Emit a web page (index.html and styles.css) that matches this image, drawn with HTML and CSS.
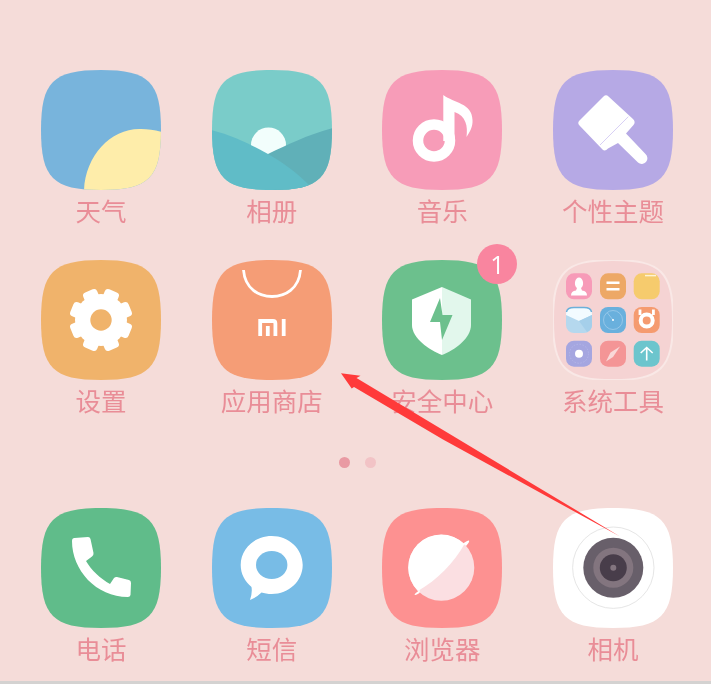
FILE: index.html
```html
<!DOCTYPE html>
<html lang="zh-CN">
<head>
<meta charset="utf-8">
<title>主屏幕</title>
<link rel="stylesheet" href="styles.css">
</head>
<body>
<svg class="defs" width="0" height="0" aria-hidden="true">
  <defs>
    <path id="sq" d="M60 0C84 0 99 3 108 12C117 21 120 36 120 60C120 84 117 99 108 108C99 117 84 120 60 120C36 120 21 117 12 108C3 99 0 84 0 60C0 36 3 21 12 12C21 3 36 0 60 0Z"/>
    <clipPath id="sqclip"><use href="#sq"/></clipPath>
    <rect id="tooth" x="52.500" y="28.500" width="15" height="14" rx="3.500"/>
  </defs>
</svg>
<main class="screen">
  <section class="grid">
    <div class="app">
      <svg class="icon" viewBox="0 0 120 120">
        <g clip-path="url(#sqclip)">
          <rect width="120" height="120" fill="#78b4dc"/>
          <path d="M43 121C44 86 70 58 100 59C107 59 114 60 121 62V121Z" fill="#feedaa"/>
        </g>
      </svg>
      <span class="label">天气</span>
    </div>
    <div class="app">
      <svg class="icon" viewBox="0 0 120 120">
        <g clip-path="url(#sqclip)">
          <rect width="120" height="120" fill="#7accc9"/>
          <circle cx="56.500" cy="75" r="17.500" fill="#f2fefc"/>
          <path d="M56 84C75 75 95 65 121 58V121H56Z" fill="#60b0b8"/>
          <path d="M-1 60C20 65 40 75 56 84C72 93 85 103 98 116L100 121H-1Z" fill="#60bcc7"/>
        </g>
      </svg>
      <span class="label">相册</span>
    </div>
    <div class="app">
      <svg class="icon" viewBox="0 0 120 120">
        <use href="#sq" fill="#f79cb8"/>
        <circle cx="52" cy="70.500" r="16" fill="none" stroke="#fff" stroke-width="10.500"/>
        <path d="M61.300 25C72 33 90 33 90.500 50C91 56 88 62 84.500 67C86 56 84 46 72.500 42V71H61.300Z" fill="#fff"/>
      </svg>
      <span class="label">音乐</span>
    </div>
    <div class="app">
      <svg class="icon" viewBox="0 0 120 120">
        <use href="#sq" fill="#b6a9e5"/>
        <path d="M50.500 26.500Q53 24 55.500 26.500L80 49Q83 52 80.500 55L73 63.500L92.500 84A5.500 5.500 0 0 1 85 92.500L65 73L55 78.500Q52 82 49.500 79.500L26.500 55.500Q24 53 26.500 50.500Z" fill="#fff"/>
        <path d="M75.300 46.700L47 75" stroke="#d8d0f5" stroke-width="1" fill="none"/>
      </svg>
      <span class="label">个性主题</span>
    </div>

    <div class="app">
      <svg class="icon" viewBox="0 0 120 120">
        <use href="#sq" fill="#f0b36b"/>
        <g fill="#fff">
          <circle cx="60" cy="60" r="26"/>
          <use href="#tooth" transform="rotate(22.500 60 60)"/>
          <use href="#tooth" transform="rotate(67.500 60 60)"/>
          <use href="#tooth" transform="rotate(112.500 60 60)"/>
          <use href="#tooth" transform="rotate(157.500 60 60)"/>
          <use href="#tooth" transform="rotate(202.500 60 60)"/>
          <use href="#tooth" transform="rotate(247.500 60 60)"/>
          <use href="#tooth" transform="rotate(292.500 60 60)"/>
          <use href="#tooth" transform="rotate(337.500 60 60)"/>
        </g>
        <circle cx="60" cy="60" r="10.700" fill="#f0b36b"/>
      </svg>
      <span class="label">设置</span>
    </div>
    <div class="app">
      <svg class="icon" viewBox="0 0 120 120">
        <use href="#sq" fill="#f59d76"/>
        <path d="M31.500 10C33 29 47 36.500 60 36.500C73 36.500 87 29 88.500 10" fill="none" stroke="#fff" stroke-width="2.800"/>
        <g fill="none" stroke="#fff" stroke-width="3.800">
          <path d="M48.200 76V61H61Q63.400 61 63.400 63.500V76"/>
          <path d="M55.800 76V66"/>
          <path d="M71.700 76V59"/>
        </g>
      </svg>
      <span class="label">应用商店</span>
    </div>
    <div class="app">
      <svg class="icon" viewBox="0 0 120 120">
        <use href="#sq" fill="#6cc08d"/>
        <path d="M60 27L30 39.500V65C30 78 47 90 60 95Z" fill="#fff"/>
        <path d="M60 27L89 39.500V65C89 78 73 90 60 95Z" fill="#e2f7ec"/>
        <path d="M58 38L48 62H58L60 80L70.500 55H60.500Z" fill="#6cc08d"/>
      </svg>
      <span class="label">安全中心</span>
      <span class="badge">1</span>
    </div>
    <div class="app">
      <svg class="icon" viewBox="0 0 120 120">
        <use href="#sq" fill="#f5d3d3" stroke="#f9e8e6" stroke-width="2"/>
        <rect x="13" y="13.300" width="26" height="26" rx="8" fill="#f79bb8"/>
        <path d="M18 35.500Q18 31 23 30.500L24 28Q21.500 26 22 22Q23 17.500 26 17.500Q29 17.500 30 22Q30.500 26 28 28L29 30.500Q34 31 34 35.500Z" fill="#fff"/>
        <rect x="47" y="13.300" width="26" height="26" rx="8" fill="#eda866"/>
        <path d="M53.500 22.800H66.500M53.500 29.300H66.500" stroke="#fff" stroke-width="2.500"/>
        <rect x="80.700" y="13.300" width="26" height="26" rx="8" fill="#f6cb6d"/>
        <path d="M92 15.600H103" stroke="#fdf3d6" stroke-width="1.500"/>
        <rect x="13" y="47" width="26" height="26" rx="8" fill="#b5d8ee"/>
        <path d="M13 55Q13 47 21 47H31Q39 47 39 55L26 61Z" fill="#f3fbff"/>
        <path d="M13.500 52Q14 47.500 21 47.500H31Q38 47.500 38.500 52" fill="none" stroke="#6cb0d9" stroke-width="1.500"/>
        <path d="M26 61L39 55V65Q39 70 34 72Z" fill="#a5cfea"/>
        <rect x="47" y="47" width="26" height="26" rx="8" fill="#69b0dd"/>
        <circle cx="60" cy="60" r="9.500" fill="none" stroke="#a7d0ec" stroke-width=".7"/>
        <path d="M60 60L54.500 53" stroke="#a7d0ec" stroke-width=".7"/>
        <circle cx="60" cy="60" r="1" fill="#fff"/>
        <rect x="80.700" y="47" width="26" height="26" rx="8" fill="#f59b70"/>
        <path d="M87 55V49.500M100.400 55V49.500" stroke="#fff" stroke-width="2.800"/>
        <circle cx="93.700" cy="60.500" r="6" fill="none" stroke="#fff" stroke-width="4"/>
        <rect x="13" y="80.700" width="26" height="26" rx="8" fill="#a5a6e0"/>
        <circle cx="26" cy="93.700" r="4" fill="#fff"/>
        <circle cx="26" cy="93.700" r="9.500" fill="none" stroke="#b9baea" stroke-width=".7" stroke-dasharray="1.500 1.500"/>
        <rect x="47" y="80.700" width="26" height="26" rx="8" fill="#f49596"/>
        <path d="M67 86.500L60 97L53 101.500L57.500 92.500Z" fill="#f9d8d8"/>
        <rect x="80.700" y="80.700" width="26" height="26" rx="8" fill="#6cc5cd"/>
        <path d="M93.700 100.500V87.500M87.700 93L93.700 87.500L99.700 93" fill="none" stroke="#fff" stroke-width="1.600"/>
      </svg>
      <span class="label">系统工具</span>
    </div>
  </section>

  <div class="dots">
    <span class="dot dot-on"></span>
    <span class="dot"></span>
  </div>

  <section class="grid">
    <div class="app">
      <svg class="icon" viewBox="0 0 120 120">
        <use href="#sq" fill="#60bc8a"/>
        <path d="M33.500 30L47 29Q49 29 49.500 31L52.500 45Q52.800 47 51 48.500L45 53C50 62 60 71 69 76L73 70Q74.500 68.500 76 69L88 72Q90 72.500 90 75L89.500 87Q89 89 87 89C55 89 31 62 31 33Q31 30 33.500 30Z" fill="#fff"/>
      </svg>
      <span class="label">电话</span>
    </div>
    <div class="app">
      <svg class="icon" viewBox="0 0 120 120">
        <use href="#sq" fill="#78bce6"/>
        <path d="M59.700 28C77 28 90.700 41 90.700 57C90.700 73 77 86 59.700 86C56 86 52 85.300 49.500 84.500Q44 90 38 92Q40.500 85 39.500 79C33 73.500 28.700 66 28.700 57C28.700 41 42.500 28 59.700 28Z" fill="#fff"/>
        <ellipse cx="59.700" cy="57" rx="15.700" ry="14" fill="#78bce6"/>
      </svg>
      <span class="label">短信</span>
    </div>
    <div class="app">
      <svg class="icon" viewBox="0 0 120 120">
        <use href="#sq" fill="#fd9191"/>
        <circle cx="59.300" cy="59.700" r="33" fill="#fbdfe2"/>
        <path d="M82.500 36A33 33 0 0 0 36 83C55 72 72 55 82.500 36Z" fill="#fff"/>
        <path d="M81 35.500Q86 32 87 32.500Q88 33.500 84 38Z" fill="#fff"/>
        <path d="M38 82Q33 85 32.500 86.500Q33 87.800 37.500 85Z" fill="#fff"/>
      </svg>
      <span class="label">浏览器</span>
    </div>
    <div class="app">
      <svg class="icon" viewBox="0 0 120 120">
        <use href="#sq" fill="#fff"/>
        <circle cx="60.300" cy="59.700" r="40.700" fill="none" stroke="#e6e6e6" stroke-width="1"/>
        <circle cx="60.300" cy="59.700" r="30" fill="#685f6a"/>
        <circle cx="60.300" cy="59.700" r="20" fill="#83757f"/>
        <circle cx="60.300" cy="59.700" r="13.500" fill="#483d4a"/>
        <circle cx="60.300" cy="59.700" r="3" fill="#83757f"/>
      </svg>
      <span class="label">相机</span>
    </div>
  </section>
  <div class="edge"></div>

  <svg class="arrow" viewBox="0 0 711 684" aria-hidden="true">
    <path d="M341 373.300L360.500 375.700L356.500 378L620 536.500L443 439.500L354 387L351.700 388.500Z" fill="#ff3a3a"/>
  </svg>
</main>
</body>
</html>
```
FILE: styles.css
```css
* { box-sizing: border-box; }
html, body { margin: 0; padding: 0; }
body {
  width: 711px;
  height: 684px;
  overflow: hidden;
  background: #f5dcd9;
  font-family: "Noto Sans CJK SC", "Noto Sans", sans-serif;
}
.defs { position: absolute; }
.screen {
  position: relative;
  height: 684px;
  padding-top: 70px;
  display: flex;
  flex-direction: column;
}
.grid {
  display: grid;
  grid-template-columns: repeat(4, 120px);
  column-gap: 50.67px;
  row-gap: 28px;
  padding-left: 41px;
  filter: blur(0.4px);
}
.app {
  position: relative;
  display: flex;
  flex-direction: column;
  align-items: center;
}
.icon {
  display: block;
  width: 120px;
  height: 120px;
}
.label {
  height: 42px;
  line-height: 39px;
  font-size: 25.5px;
  font-weight: 400;
  color: #e98d97;
  white-space: nowrap;
}
.badge {
  position: absolute;
  top: -16px;
  left: 95px;
  width: 40px;
  height: 40px;
  border-radius: 50%;
  background: #f9859f;
  color: #fff;
  font-family: "Open Sans", sans-serif;
  font-size: 25px;
  line-height: 40px;
  text-align: center;
}
.dots {
  display: flex;
  justify-content: center;
  gap: 15px;
  padding-left: 3px;
  margin-top: 35px;
  margin-bottom: 40px;
}
.dot {
  width: 11px;
  height: 11px;
  border-radius: 50%;
  background: #f2c3c6;
}
.dot-on { background: #e99aa3; }
.edge {
  height: 3px;
  margin-top: auto;
  background: #d4d2d1;
}
.arrow {
  position: absolute;
  top: 0;
  left: 0;
  width: 711px;
  height: 684px;
  pointer-events: none;
}
```
